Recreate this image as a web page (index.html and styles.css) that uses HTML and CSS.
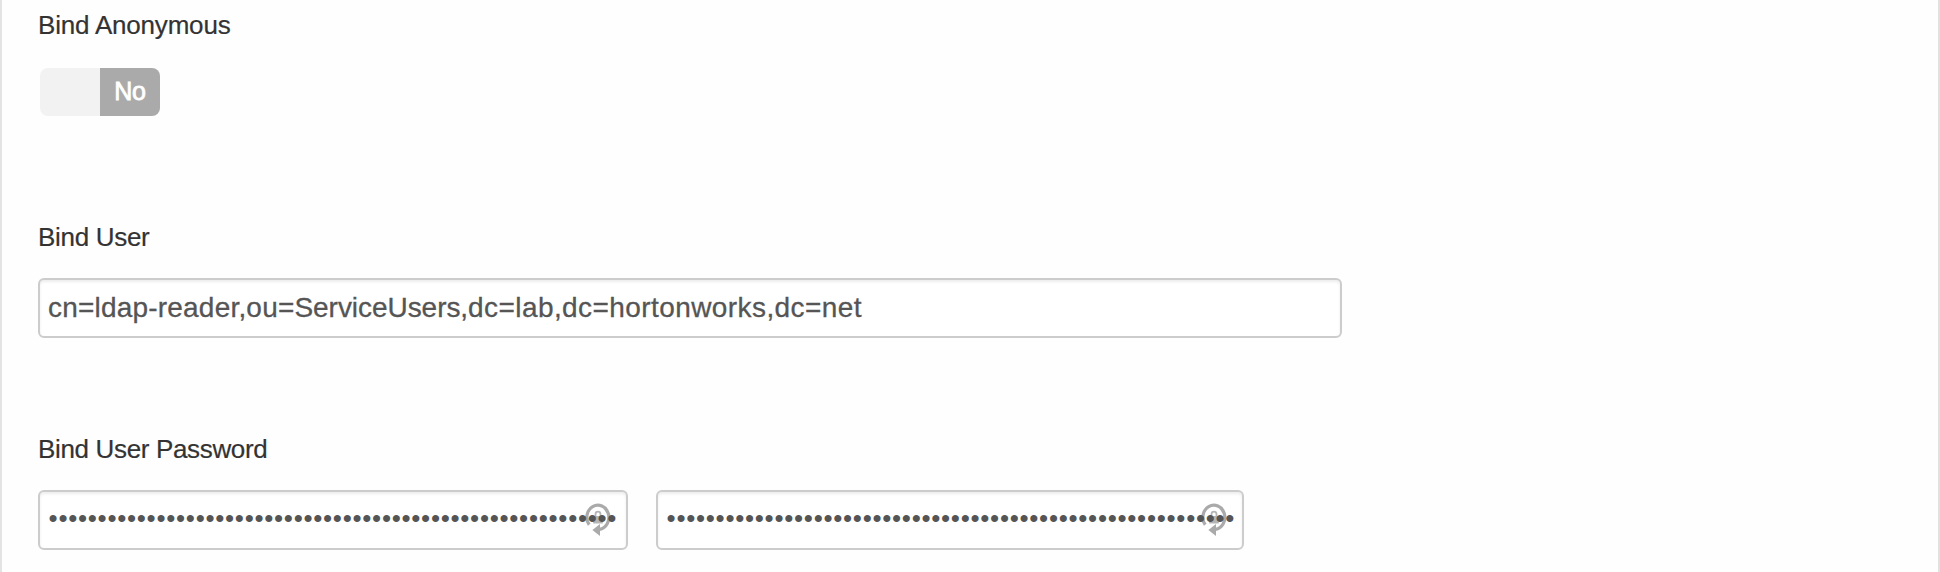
FILE: index.html
```html
<!DOCTYPE html>
<html lang="en">
<head>
<meta charset="utf-8">
<title>Bind settings</title>
<link rel="stylesheet" href="styles.css">
</head>
<body>
<svg width="0" height="0" class="defs" aria-hidden="true">
  <symbol id="lock-cycle" viewBox="0 0 28 34">
    <path d="M5.2 21.8A11 12.1 0 1 1 15.5 26.3" fill="none" stroke="#aaa" stroke-width="3.2"/>
    <path d="M8.4 27L16 21V33z" fill="#aaa"/>
    <path d="M11.5 14V11.2a2.5 2.5 0 0 1 5 0V14" fill="none" stroke="#b5b5b5" stroke-width="1.8"/>
    <rect x="9.2" y="13" width="9.6" height="7.5" fill="#b5b5b5"/>
  </symbol>
</svg>
<main class="panel">
  <section class="group">
    <div class="label label-anonymous">Bind Anonymous</div>
    <div class="switch"><span class="switch-handle"></span><span class="switch-state">No</span></div>
  </section>
  <section class="group">
    <div class="label label-user">Bind User</div>
    <div class="field field-wide"><span class="value">cn=ldap-reader,ou=<span class="value-unit">ServiceUsers,</span><span class="value-domain">dc=lab,dc=hortonworks,dc=net</span></span></div>
  </section>
  <section class="group">
    <div class="label label-password">Bind User Password</div>
    <div class="pair">
      <div class="field field-password"><svg class="lock"><use href="#lock-cycle"/></svg><span class="dots">••••••••••••••••••••••••••••••••••••••••••••••••••••••••••</span></div>
      <div class="field field-confirm"><svg class="lock"><use href="#lock-cycle"/></svg><span class="dots">•••••••••••••••••••••••••••••••••••••••••••••••••••••••••••</span></div>
    </div>
  </section>
</main>
</body>
</html>
```
FILE: styles.css
```css
* { box-sizing: border-box; }
body {
  margin: 0;
  background: #fefefe;
  font-family: "Liberation Sans", Arial, sans-serif;
  overflow: hidden;
}
.defs { display: none; }
.panel {
  height: 572px;
  padding: 5px 0 0 36px;
  border-left: 2px solid #e3e3e3;
  border-right: 2px solid #e1e1e1;
  overflow: hidden;
}
.group { height: 212px; }
.label {
  height: 40px;
  line-height: 40px;
  font-size: 26px;
  color: #333;
  white-space: nowrap;
  -webkit-text-stroke: 0.2px #333;
}
.label-anonymous { letter-spacing: -0.19px; }
.label-user { letter-spacing: -0.3px; }
.label-password { letter-spacing: -0.34px; }
.switch {
  display: flex;
  width: 120px;
  height: 48px;
  margin: 23px 0 0 2px;
  border-radius: 8px;
  overflow: hidden;
}
.switch-handle { width: 60px; background: #f2f2f2; }
.switch-state {
  width: 60px;
  background: #aaa;
  color: #fff;
  font-size: 25px;
  line-height: 47px;
  text-align: center;
  letter-spacing: -0.3px;
  -webkit-text-stroke: 0.8px #fff;
}
.field {
  position: relative;
  height: 60px;
  padding: 0 6px 0 8px;
  border: 2px solid #ccc;
  border-radius: 6px;
  background: #fff;
  box-shadow: inset 0 2px 3px rgba(0, 0, 0, 0.075);
  font-size: 28px;
  line-height: 56px;
  color: #555;
  white-space: nowrap;
}
.value {
  letter-spacing: 0.2px;
  -webkit-text-stroke: 0.3px #555;
}
.value-unit { letter-spacing: -0.05px; }
.value-domain { letter-spacing: 0.42px; }
.field-wide { width: 1304px; margin-top: 21px; }
.pair { display: flex; gap: 28px; margin-top: 21px; }
.field-password { width: 590px; }
.field-confirm { width: 588px; }
.dots {
  display: block;
  position: relative;
  overflow: hidden;
  padding-left: 0.6px;
  font-size: 26px;
  line-height: 53px;
  letter-spacing: 0.7px;
}
.lock {
  position: absolute;
  top: 11px;
  right: 14px;
  width: 28px;
  height: 34px;
}
```
